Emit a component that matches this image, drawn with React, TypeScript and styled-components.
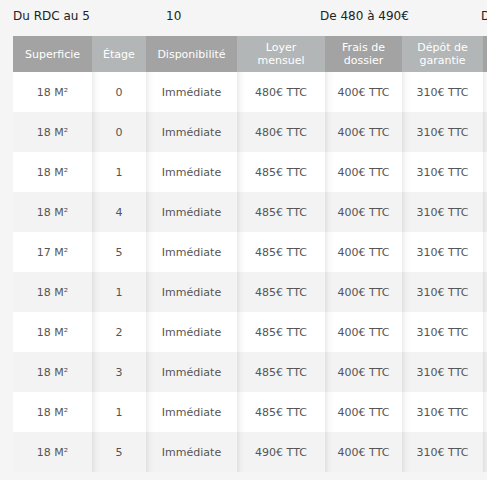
import React from "react";
import styled, { createGlobalStyle } from "styled-components";

const Global = createGlobalStyle`
  html, body { margin: 0; padding: 0; background: #f5f5f5; }
  body { font-family: "DejaVu Sans", Verdana, sans-serif; }
`;

const Page = styled.div`
  width: 487px;
  height: 480px;
  overflow: hidden;
  padding-left: 13px;
  box-sizing: border-box;
`;

const Summary = styled.div`
  display: flex;
  height: 32px;
  align-items: center;
  margin-bottom: 4px;
  font-size: 12px;
  color: #222;
  white-space: nowrap;
`;

const SummaryCell = styled.div<{ $w: number }>`
  flex: 0 0 ${(p) => p.$w}px;
`;

const Table = styled.table`
  border-collapse: collapse;
  table-layout: fixed;
  width: 570px;
  font-size: 11px;
`;

const Th = styled.th<{ $dark: boolean; $w: number }>`
  width: ${(p) => p.$w}px;
  height: 36px;
  padding: 0 4px;
  box-sizing: border-box;
  background: ${(p) => (p.$dark ? "#a3a3a3" : "#b3b6b6")};
  color: #fff;
  font-weight: normal;
  line-height: 13px;
  text-align: center;
  vertical-align: middle;
`;

const Tr = styled.tr<{ $alt: boolean }>`
  background: ${(p) => (p.$alt ? "#f3f3f3" : "#ffffff")};
`;

const Td = styled.td<{ $shadow: boolean }>`
  height: 40px;
  padding: 0 4px;
  box-sizing: border-box;
  color: #555;
  text-align: center;
  vertical-align: middle;
  white-space: nowrap;
  background-image: ${(p) =>
    p.$shadow
      ? "linear-gradient(to right, rgba(0,0,0,0.075), rgba(0,0,0,0.02) 4px, rgba(0,0,0,0) 9px)"
      : "none"};
`;

const columns = [
  { label: "Superficie", w: 79 },
  { label: "Étage", w: 54 },
  { label: "Disponibilité", w: 91 },
  { label: "Loyer mensuel", w: 88 },
  { label: "Frais de dossier", w: 77 },
  { label: "Dépôt de garantie", w: 81 },
  { label: "", w: 100 },
];

const rows: [string, string, string][] = [
  ["18", "0", "480"],
  ["18", "0", "480"],
  ["18", "1", "485"],
  ["18", "4", "485"],
  ["17", "5", "485"],
  ["18", "1", "485"],
  ["18", "2", "485"],
  ["18", "3", "485"],
  ["18", "1", "485"],
  ["18", "5", "490"],
];

export default function App() {
  return (
    <>
      <Global />
      <Page>
        <Summary>
          <SummaryCell $w={153}>Du RDC au 5</SummaryCell>
          <SummaryCell $w={154}>10</SummaryCell>
          <SummaryCell $w={161}>De 480 à 490€</SummaryCell>
          <SummaryCell $w={100}>De 400 €</SummaryCell>
        </Summary>
        <Table>
          <thead>
            <tr>
              {columns.map((c, i) => (
                <Th key={i} $dark={i % 2 === 0} $w={c.w}>
                  {c.label}
                </Th>
              ))}
            </tr>
          </thead>
          <tbody>
            {rows.map(([s, e, l], i) => (
              <Tr key={i} $alt={i % 2 === 1}>
                <Td $shadow={false}>{s} M²</Td>
                <Td $shadow>{e}</Td>
                <Td $shadow>Immédiate</Td>
                <Td $shadow>{l}€ TTC</Td>
                <Td $shadow>400€ TTC</Td>
                <Td $shadow>310€ TTC</Td>
                <Td $shadow></Td>
              </Tr>
            ))}
          </tbody>
        </Table>
      </Page>
    </>
  );
}
